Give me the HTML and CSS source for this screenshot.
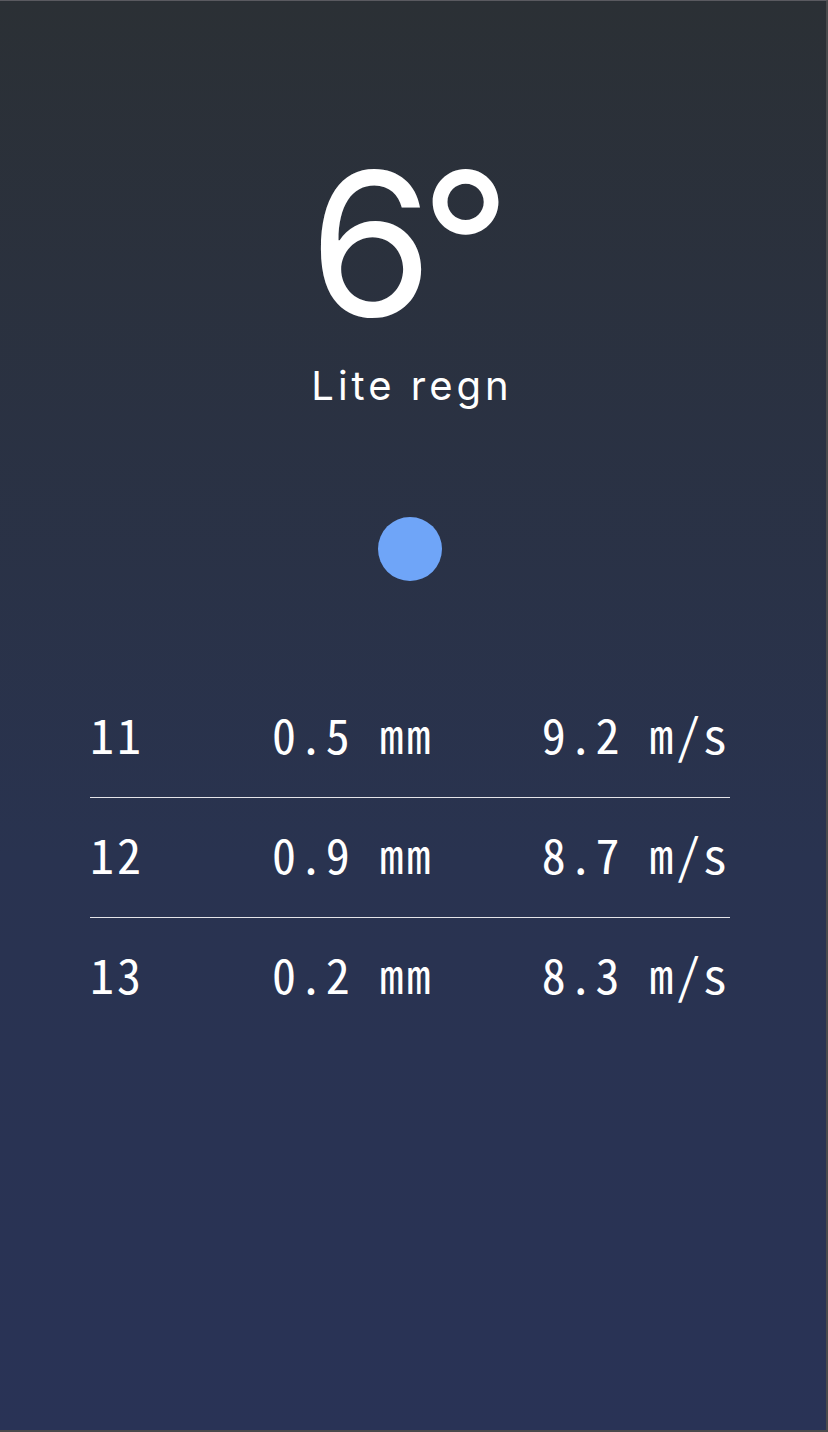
FILE: index.html
```html
<!DOCTYPE html>
<html lang="sv">
<head>
<meta charset="utf-8">
<title>Väder</title>
<link rel="stylesheet" href="styles.css">
</head>
<body>
<div class="screen">
  <main class="app">
    <section class="now">
      <div class="temp">6°</div>
      <div class="desc">Lite regn</div>
      <div class="dot"></div>
    </section>
    <section class="hours">
      <div class="row"><span class="hour">11</span><span class="rain">0.5 mm</span><span class="wind">9.2 m/s</span></div>
      <div class="row"><span class="hour">12</span><span class="rain">0.9 mm</span><span class="wind">8.7 m/s</span></div>
      <div class="row"><span class="hour">13</span><span class="rain">0.2 mm</span><span class="wind">8.3 m/s</span></div>
    </section>
  </main>
</div>
</body>
</html>
```
FILE: styles.css
```css
html, body {
  margin: 0;
  padding: 0;
  background: #4a4a4d;
}

.screen {
  width: 826px;
  height: 1429px;
  border-top: 1px solid #5a5a60;
  border-right: 2px solid #4a4a4c;
  border-bottom: 2px solid #4a4a4c;
  background: linear-gradient(180deg, #2b3035 0%, #293350 60%, #293356 100%);
  overflow: hidden;
}

.app {
  width: 820px;
  display: flex;
  flex-direction: column;
  align-items: center;
  color: #ffffff;
}

.now {
  display: flex;
  flex-direction: column;
  align-items: center;
  padding-top: 142px;
}

.temp {
  font-family: Inter, "Noto Sans", sans-serif;
  font-size: 200px;
  line-height: 200px;
  font-weight: 400;
  letter-spacing: -13px;
  padding-right: 13px;
}

.desc {
  margin-top: 19px;
  font-family: Inter, "Noto Sans", sans-serif;
  font-size: 40px;
  line-height: 48px;
  letter-spacing: 4px;
  padding-left: 4px;
}

.dot {
  margin-top: 107px;
  width: 64px;
  height: 64px;
  border-radius: 50%;
  background: #6fa5f8;
}

.hours {
  width: 640px;
  margin-top: 97px;
  font-family: "Noto Sans Mono CJK SC", "DejaVu Sans Mono", monospace;
  font-size: 48px;
  letter-spacing: 0.06em;
  font-variant-numeric: slashed-zero;
}

.row {
  display: grid;
  grid-template-columns: 182px 1fr auto;
  line-height: 56px;
  padding: 27px 0 36px;
  border-bottom: 1px solid #e4e4e8;
}

.row:last-child {
  border-bottom: none;
}

.wind {
  text-align: right;
}
```
